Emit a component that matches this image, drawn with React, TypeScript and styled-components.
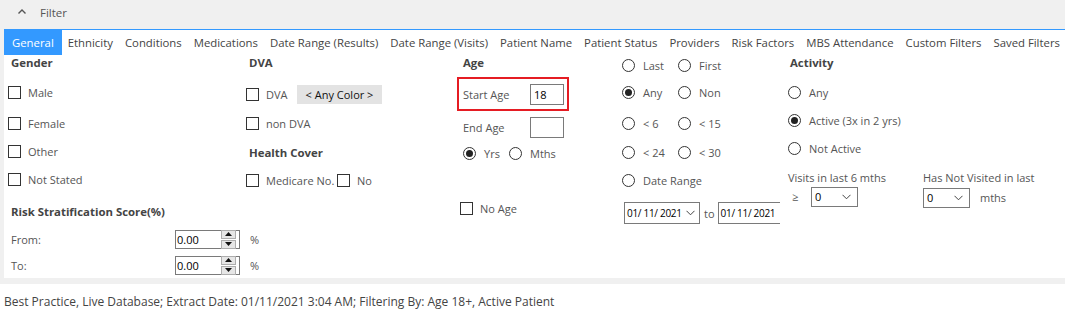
import styled, { createGlobalStyle } from 'styled-components'

const GlobalStyle = createGlobalStyle`
  html, body {
    margin: 0;
    padding: 0;
    background: #ffffff;
  }
  body {
    font-family: "Segoe UI", "Open Sans", "Noto Sans", sans-serif;
    font-size: 11px;
  }
`

const TABS = [
    "General", "Ethnicity", "Conditions", "Medications", "Date Range (Results)",
    "Date Range (Visits)", "Patient Name", "Patient Status", "Providers",
    "Risk Factors", "MBS Attendance", "Custom Filters", "Saved Filters"
]

const Check = ({ label, mt = 0 }: { label: string, mt?: number }) => (
    <Row $mt={mt}>
        <CheckBox />
        <Label>{label}</Label>
    </Row>
)

const Radio = ({ label, on = false, w }: { label: string, on?: boolean, w?: number }) => (
    <RadioItem $w={w}>
        <RadioDot $on={on} />
        <Label>{label}</Label>
    </RadioItem>
)

const Chevron = () => (
    <svg width="9" height="6" viewBox="0 0 9 6">
        <path d="M0.5 0.8 L4.5 4.8 L8.5 0.8" fill="none" stroke="#444" strokeWidth="1" />
    </svg>
)

const Spin = ({ value }: { value: string }) => (
    <SpinBox>
        <SpinText>{value}</SpinText>
        <SpinButtons>
            <SpinBtn>
                <svg width="7" height="4" viewBox="0 0 7 4"><path d="M0 4 L3.5 0 L7 4 Z" fill="#111" /></svg>
            </SpinBtn>
            <SpinBtn>
                <svg width="7" height="4" viewBox="0 0 7 4"><path d="M0 0 L3.5 4 L7 0 Z" fill="#111" /></svg>
            </SpinBtn>
        </SpinButtons>
    </SpinBox>
)

const App = () => {
    return (
        <Page>
            <GlobalStyle />
            <TopBar>
                <svg width="8" height="5" viewBox="0 0 8 5">
                    <path d="M0.5 4.5 L4 1 L7.5 4.5" fill="none" stroke="#555" strokeWidth="1.4" />
                </svg>
                <span>Filter</span>
            </TopBar>

            <TabStrip>
                {TABS.map((t, i) => (
                    <Tab key={t} $active={i === 0}>{t}</Tab>
                ))}
            </TabStrip>

            <Panel>
                {/* gender + risk */}
                <Column $w={242} $pl={4}>
                    <Heading $ml={3}>Gender</Heading>
                    <Check label="Male" mt={12} />
                    <Check label="Female" mt={11} />
                    <Check label="Other" mt={8} />
                    <Check label="Not Stated" mt={8} />
                    <Heading $ml={3} $mt={15}>Risk Stratification Score(%)</Heading>
                    <Row $mt={10} $pl={3}>
                        <FieldLabel $w={164}>From:</FieldLabel>
                        <Spin value="0.00" />
                        <Percent>%</Percent>
                    </Row>
                    <Row $mt={6} $pl={3}>
                        <FieldLabel $w={164}>To:</FieldLabel>
                        <Spin value="0.00" />
                        <Percent>%</Percent>
                    </Row>
                </Column>

                {/* dva */}
                <Column $w={211}>
                    <Heading $ml={3}>DVA</Heading>
                    <Row $mt={14}>
                        <CheckBox />
                        <Label $w={31}>DVA</Label>
                        <ColorPick>&lt; Any Color &gt;</ColorPick>
                    </Row>
                    <Check label="non DVA" mt={9} />
                    <Heading $ml={3} $mt={12}>Health Cover</Heading>
                    <Row $mt={10}>
                        <CheckBox />
                        <Label $w={71}>Medicare No.</Label>
                        <CheckBox />
                        <Label>No</Label>
                    </Row>
                </Column>

                {/* age */}
                <Column $w={165}>
                    <Heading $ml={6}>Age</Heading>
                    <AgeBox>
                        <FieldLabel $w={67}>Start Age</FieldLabel>
                        <TextBox>18</TextBox>
                    </AgeBox>
                    <Row $mt={6} $h={21} $pl={6}>
                        <FieldLabel $w={67}>End Age</FieldLabel>
                        <TextBox />
                    </Row>
                    <Row $mt={5} $pl={6}>
                        <Radio label="Yrs" on w={46} />
                        <Radio label="Mths" />
                    </Row>
                    <Row $mt={35} $pl={3}>
                        <CheckBox />
                        <Label>No Age</Label>
                    </Row>
                </Column>

                {/* visit range */}
                <Column $w={166}>
                    <ClipArea>
                        <Row>
                            <Radio label="Last" w={56} />
                            <Radio label="First" />
                        </Row>
                        <Row $mt={7}>
                            <Radio label="Any" on w={56} />
                            <Radio label="Non" />
                        </Row>
                        <Row $mt={11}>
                            <Radio label="< 6" w={56} />
                            <Radio label="< 15" />
                        </Row>
                        <Row $mt={9}>
                            <Radio label="< 24" w={56} />
                            <Radio label="< 30" />
                        </Row>
                        <Row $mt={8}>
                            <Radio label="Date Range" />
                        </Row>
                        <Row $mt={12} $h={22} $pl={2}>
                            <DateBox $w={76}>
                                <span>01/ 11/ 2021</span>
                                <Chevron />
                            </DateBox>
                            <ToText>to</ToText>
                            <DateBox $w={76}>
                                <span>01/ 11/ 2021</span>
                            </DateBox>
                        </Row>
                    </ClipArea>
                </Column>

                {/* activity */}
                <Column $w={270}>
                    <Heading $ml={2}>Activity</Heading>
                    <Row $mt={12}>
                        <Radio label="Any" />
                    </Row>
                    <Row $mt={8}>
                        <Radio label="Active (3x in 2 yrs)" on />
                    </Row>
                    <Row $mt={8}>
                        <Radio label="Not Active" />
                    </Row>
                    <VisitGrid>
                        <div>
                            <Label>Visits in last 6 mths</Label>
                            <Row $mt={1} $pl={4}>
                                <Label $w={19}>≥</Label>
                                <SelectBox>
                                    <span>0</span>
                                    <Chevron />
                                </SelectBox>
                            </Row>
                        </div>
                        <div>
                            <Label>Has Not Visited in last</Label>
                            <Row $mt={2}>
                                <SelectBox>
                                    <span>0</span>
                                    <Chevron />
                                </SelectBox>
                                <Label $ml={10}>mths</Label>
                            </Row>
                        </div>
                    </VisitGrid>
                </Column>
            </Panel>

            <StatusBar>
                Best Practice, Live Database; Extract Date: 01/11/2021 3:04 AM; Filtering By: Age 18+, Active Patient
            </StatusBar>
        </Page>
    )
}

export default App



const Page = styled.div`
  width: 1065px;
  height: 310px;
  background: #f0f0f0;
  overflow: hidden;
  color: #555;
`

const TopBar = styled.div`
  height: 29px;
  display: flex;
  align-items: center;
  gap: 14px;
  padding-left: 18px;
  padding-bottom: 4px;
  box-sizing: border-box;
  color: #555;
  font-size: 11.5px;

  svg {
    margin-top: -2px;
  }
`

const TabStrip = styled.div`
  margin-left: 4px;
  height: 26px;
  display: flex;
  background: #ffffff;
  border-top: 1px solid #3399ff;
  box-sizing: border-box;
  white-space: nowrap;
  font-size: 11.35px;
`

const Tab = styled.div<{ $active?: boolean }>`
  padding: 0 6px;
  display: flex;
  align-items: center;
  color: ${p => p.$active ? "#ffffff" : "#444"};
  background: ${p => p.$active ? "#3399ff" : "transparent"};

  &:first-child {
    padding: 0 8px;
  }
`

const Panel = styled.div`
  margin-left: 4px;
  height: 223px;
  background: #ffffff;
  display: flex;
  overflow: hidden;
`

const Column = styled.div<{ $w: number, $pl?: number }>`
  width: ${p => p.$w}px;
  flex-shrink: 0;
  padding-left: ${p => p.$pl || 0}px;
  box-sizing: border-box;
  display: flex;
  flex-direction: column;
`

const ClipArea = styled.div`
  width: 158px;
  overflow: hidden;
`

const Heading = styled.div<{ $mt?: number, $ml?: number }>`
  height: 15px;
  line-height: 15px;
  margin-top: ${p => p.$mt || 0}px;
  margin-left: ${p => p.$ml || 0}px;
  font-weight: 700;
  font-size: 11.4px;
  color: #444;
  white-space: nowrap;
`

const Row = styled.div<{ $mt?: number, $h?: number, $pl?: number }>`
  height: ${p => p.$h || 20}px;
  margin-top: ${p => p.$mt || 0}px;
  padding-left: ${p => p.$pl || 0}px;
  display: flex;
  align-items: center;
  white-space: nowrap;
`

const CheckBox = styled.span`
  width: 11px;
  height: 11px;
  border: 1px solid #333;
  background: #fff;
  flex-shrink: 0;
  margin-right: 7px;
`

const RadioItem = styled.span<{ $w?: number }>`
  display: flex;
  align-items: center;
  width: ${p => p.$w ? `${p.$w}px` : "auto"};
  flex-shrink: 0;
`

const RadioDot = styled.span<{ $on?: boolean }>`
  width: 11px;
  height: 11px;
  border: 1px solid #333;
  border-radius: 50%;
  margin-right: 8px;
  display: flex;
  align-items: center;
  justify-content: center;
  flex-shrink: 0;

  &::after {
    content: "";
    width: 7px;
    height: 7px;
    border-radius: 50%;
    background: ${p => p.$on ? "#222" : "transparent"};
  }
`

const Label = styled.span<{ $w?: number, $ml?: number }>`
  color: #555;
  white-space: nowrap;
  width: ${p => p.$w ? `${p.$w}px` : "auto"};
  margin-left: ${p => p.$ml || 0}px;
  flex-shrink: 0;
`

const FieldLabel = styled.span<{ $w: number }>`
  width: ${p => p.$w}px;
  flex-shrink: 0;
  color: #555;
`

const ColorPick = styled.span`
  height: 19px;
  width: 85px;
  background: #e3e3e3;
  color: #111;
  display: flex;
  align-items: center;
  justify-content: center;
`

const AgeBox = styled.div`
  margin-top: 7px;
  width: 112px;
  height: 34px;
  border: 2px solid #e51c23;
  box-sizing: border-box;
  display: flex;
  align-items: center;
  padding-left: 4px;
`

const TextBox = styled.span`
  width: 34px;
  height: 21px;
  border: 1px solid #7a7a7a;
  box-sizing: border-box;
  padding-left: 3px;
  color: #000;
  display: flex;
  align-items: center;
`

const SpinBox = styled.span`
  width: 65px;
  height: 19px;
  flex-shrink: 0;
  border: 1px solid #7a7a7a;
  box-sizing: border-box;
  display: flex;
  align-items: center;
  justify-content: space-between;
  padding-right: 3px;
`

const SpinText = styled.span`
  color: #000;
  padding-left: 1px;
`

const SpinButtons = styled.span`
  display: flex;
  flex-direction: column;
  gap: 1px;
`

const SpinBtn = styled.span`
  width: 13px;
  height: 7px;
  border: 1px solid #adadad;
  background: #e6e6e6;
  display: flex;
  align-items: center;
  justify-content: center;
`

const Percent = styled.span`
  margin-left: 10px;
  color: #555;
  flex-shrink: 0;
`

const DateBox = styled.span<{ $w: number }>`
  width: ${p => p.$w}px;
  height: 22px;
  border: 1px solid #7a7a7a;
  box-sizing: border-box;
  display: flex;
  align-items: center;
  justify-content: space-between;
  padding: 0 4px 0 2px;
  color: #000;
  font-size: 10px;
  letter-spacing: -0.3px;
  flex-shrink: 0;
`

const ToText = styled.span`
  margin: 0 3px 0 4px;
  color: #555;
`

const VisitGrid = styled.div`
  margin-top: 12px;
  display: grid;
  grid-template-columns: 135px auto;
  line-height: 16px;
`

const SelectBox = styled.span`
  width: 47px;
  height: 20px;
  border: 1px solid #7a7a7a;
  box-sizing: border-box;
  display: flex;
  align-items: center;
  justify-content: space-between;
  padding: 0 6px 0 3px;
  color: #000;
`

const StatusBar = styled.div`
  margin-top: 6px;
  height: 26px;
  background: #ffffff;
  padding: 9px 0 0 4px;
  box-sizing: border-box;
  color: #444;
  font-size: 12px;
  white-space: nowrap;
`
